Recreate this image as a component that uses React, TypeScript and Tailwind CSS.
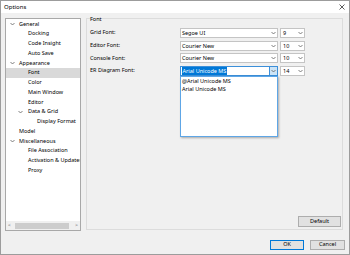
import { ReactNode } from "react";

const Chevron = ({ className = "" }: { className?: string }) => (
  <svg width="5" height="4" viewBox="0 0 5 4" className={className}>
    <polyline points="0.5,1 2.5,3 4.5,1" fill="none" stroke="#606060" strokeWidth="0.8" />
  </svg>
);

type Node = { label: string; level: number; open?: boolean; selected?: boolean };

const TREE: Node[] = [
  { label: "General", level: 0, open: true },
  { label: "Docking", level: 1 },
  { label: "Code Insight", level: 1 },
  { label: "Auto Save", level: 1 },
  { label: "Appearance", level: 0, open: true },
  { label: "Font", level: 1, selected: true },
  { label: "Color", level: 1 },
  { label: "Main Window", level: 1 },
  { label: "Editor", level: 1 },
  { label: "Data & Grid", level: 1, open: true },
  { label: "Display Format", level: 2 },
  { label: "Model", level: 0 },
  { label: "Miscellaneous", level: 0, open: true },
  { label: "File Association", level: 1 },
  { label: "Activation & Updates", level: 1 },
  { label: "Proxy", level: 1 },
];

const indent = ["pl-[13px]", "pl-[22px]", "pl-[31px]"];

const Combo = ({ value, width, children, focused }: { value: ReactNode; width: string; children?: ReactNode; focused?: boolean }) => (
  <div
    className={`relative flex h-[10px] items-center bg-white border ${
      focused ? "border-[#3c8fd9]" : "border-[#c4c4c4]"
    } ${width}`}
  >
    <div className="flex-1 pl-[1px] whitespace-nowrap leading-[8px]">{value}</div>
    <div
      className={`flex h-full w-[8px] items-center justify-center ${
        focused ? "bg-[#cce4f7] border-l border-[#3c8fd9]" : ""
      }`}
    >
      <Chevron />
    </div>
    {children}
  </div>
);

const FontRow = ({ label, face, size, focused, children }: { label: string; face: ReactNode; size: string; focused?: boolean; children?: ReactNode }) => (
  <div className="flex h-[10px] items-center">
    <div className="w-[93px] pl-[3px]">{label}</div>
    <Combo value={face} width="w-[98px]" focused={focused}>
      {children}
    </Combo>
    <div className="w-[2px]" />
    <Combo value={<span className="pl-[1px]">{size}</span>} width="w-[25px]" />
  </div>
);

export default function App() {
  return (
    <div
      className="w-[350px] h-[255px] border border-[#9c9c9c] bg-[#f0f0f0] flex flex-col text-[5.5px] leading-none text-black"
      style={{ fontFamily: '"Noto Sans", "Open Sans", sans-serif' }}
    >
      <div className="h-[12px] bg-white flex items-center justify-between pl-[3px] pr-[4px]">
        <span className="text-[6px]">Options</span>
        <svg width="6" height="6" viewBox="0 0 6 6">
          <path d="M0.5 0.5 L5.5 5.5 M5.5 0.5 L0.5 5.5" stroke="#333" strokeWidth="0.8" />
        </svg>
      </div>

      <div className="flex-1 flex flex-col px-[4px] pt-[5px]">
        <div className="flex h-[213px] gap-[5px]">
          {/* tree */}
          <div className="w-[76px] h-full border border-[#a8a8a8] bg-white flex flex-col">
            <div className="flex-1 pt-[0.5px] overflow-hidden">
              {TREE.map((n) => (
                <div
                  key={n.label}
                  className={`relative flex h-[9.75px] items-center whitespace-nowrap ${indent[n.level]} ${
                    n.selected ? "bg-[#d9d9d9]" : ""
                  }`}
                >
                  {n.open && (
                    <Chevron
                      className={`absolute ${n.level === 0 ? "left-[4px]" : "left-[12px]"}`}
                    />
                  )}
                  {n.label}
                </div>
              ))}
            </div>
            <div className="h-[9px] bg-[#f0f0f0] flex items-center px-[2px] gap-[2px]">
              <span className="text-[5px] text-[#606060] w-[5px]">&lt;</span>
              <div className="h-[6px] w-[56px] bg-[#cdcdcd]" />
              <div className="flex-1" />
              <span className="text-[5px] text-[#606060] w-[5px] text-right">&gt;</span>
            </div>
          </div>

          {/* font group */}
          <div className="flex-1 mr-[2px] h-[212px] border border-[#dcdcdc] flex flex-col">
            <div className="h-[6px] -mt-[2px] pl-[3px] flex items-center">Font</div>
            <div className="mt-[5px] flex flex-col gap-[2.7px]">
              <FontRow label="Grid Font:" face="Segoe UI" size="9" />
              <FontRow label="Editor Font:" face="Courier New" size="10" />
              <FontRow label="Console Font:" face="Courier New" size="10" />
              <FontRow
                label="ER Diagram Font:"
                face={<span className="bg-[#0078d7] text-white px-[0.5px]">Arial Unicode MS</span>}
                size="14"
                focused
              >
                <div className="absolute left-[-1px] top-[9px] w-[98px] h-[61px] bg-white border border-[#5ea6e6] shadow-[1px_1px_2px_rgba(0,0,0,0.3)] flex flex-col pt-[2px] pl-[1px] gap-[2.5px] z-10">
                  <span>@Arial Unicode MS</span>
                  <span>Arial Unicode MS</span>
                </div>
              </FontRow>
            </div>
            <div className="mt-auto self-end mr-[1px] mb-[2px] w-[43px] h-[11px] bg-[#e1e1e1] border border-[#adadad] flex items-center justify-center">
              Default
            </div>
          </div>
        </div>

        <div className="mt-[9px] flex justify-end gap-[6px]">
          <div className="w-[34px] h-[10px] bg-[#e1e1e1] border border-[#0078d7] flex items-center justify-center">
            OK
          </div>
          <div className="w-[35px] h-[10px] bg-[#e1e1e1] border border-[#adadad] flex items-center justify-center">
            Cancel
          </div>
        </div>
      </div>
    </div>
  );
}
